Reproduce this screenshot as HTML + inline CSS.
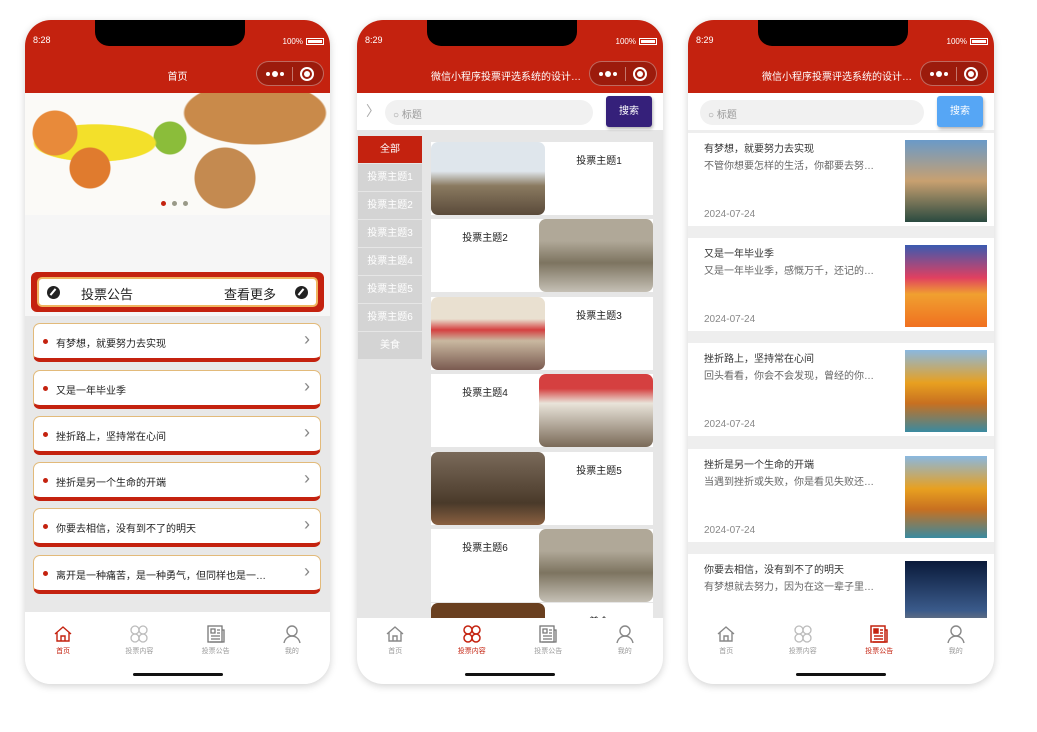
<!DOCTYPE html>
<html><head><meta charset="utf-8"><style>
*{box-sizing:border-box;margin:0;padding:0}
body{width:1037px;height:732px;background:#fff;position:relative;overflow:hidden;font-family:"Liberation Sans","Noto Sans CJK SC",sans-serif;color:#333}
.ph{position:absolute;top:20px;height:664px;border-radius:26px;overflow:hidden;background:#fff;box-shadow:0 2px 8px rgba(0,0,0,.18)}
.hd{position:absolute;left:0;right:0;top:0;height:73px;background:#c4220f;color:#fff}
.notch{position:absolute;top:0;left:70px;width:150px;height:26px;background:#000;border-radius:0 0 14px 14px}
.tm{position:absolute;left:8px;top:15px;font-size:9px}
.bat{position:absolute;right:6px;top:17px;font-size:8px}
.bat i{display:inline-block;width:18px;height:7px;border:1px solid #fff;margin-left:3px;vertical-align:middle;position:relative}
.bat i:after{content:"";position:absolute;inset:1px;background:#fff}
.ttl{position:absolute;top:48px;font-size:10px;width:100%;text-align:center}
.cap{position:absolute;right:6px;top:41px;width:68px;height:25px;border-radius:13px;background:rgba(0,0,0,.2);border:1px solid rgba(255,255,255,.35)}
.cap .d{position:absolute;left:9px;top:10px;width:18px;height:4px;display:flex;gap:2px;align-items:center}
.cap .d b{width:4px;height:4px;background:#fff;border-radius:50%}
.cap .d b:nth-child(2){width:6px;height:6px}
.cap .l{position:absolute;left:35px;top:5px;width:1px;height:14px;background:rgba(255,255,255,.4)}
.cap .o{position:absolute;right:9px;top:5px;width:14px;height:14px;border:2px solid #fff;border-radius:50%}
.cap .o:after{content:"";position:absolute;left:2px;top:2px;width:6px;height:6px;background:#fff;border-radius:50%}
.tab{position:absolute;left:0;right:0;bottom:0;height:66px;background:#fff;display:flex}
.tab div{flex:1;text-align:center;font-size:7px;color:#999;padding-top:6px}
.tab div.a{color:#c4220f}
.tab svg{display:block;margin:0 auto 2px;width:20px;height:20px}
.hb{position:absolute;bottom:8px;left:50%;margin-left:-45px;width:90px;height:3px;background:#111;border-radius:2px}
.sr{position:absolute;top:73px;left:0;right:0;height:37px;background:#fff}
.sin{position:absolute;left:28px;top:7px;width:208px;height:25px;background:#f1f1f1;border-radius:13px;font-size:10px;color:#999;padding:6px 0 0 8px}
.sbtn{position:absolute;right:11px;top:3px;width:46px;height:31px;border-radius:3px;color:#fff;font-size:10px;text-align:center;line-height:31px;box-shadow:1px 2px 3px rgba(0,0,0,.3)}
.li{position:absolute;left:8px;width:288px;height:39px;background:#fff;border:1.5px solid #e2ba7a;border-bottom:4px solid #c4220f;border-radius:7px;font-size:10px;color:#222;padding:11px 0 0 22px}
.li:before{content:"";position:absolute;left:9px;top:15px;width:5px;height:5px;border-radius:50%;background:#c4220f}
.li:after{content:"›";position:absolute;right:10px;top:5px;font-size:18px;color:#888}
.cat{position:absolute;left:1px;width:64px;height:27px;background:#d4d4d4;color:#fff;font-size:10px;text-align:center;line-height:27px}
.cd{position:absolute;left:74px;width:222px;height:73px;background:#fff}
.cd .im{position:absolute;top:0;width:114px;height:73px;border-radius:7px}
.cd .t{position:absolute;top:10px;font-size:10px;color:#222;width:108px;text-align:center}
.nc{position:absolute;left:0;right:0;height:97px;background:#fff;border-bottom:4px solid #eee}
.nc .a{position:absolute;left:16px;top:10px;font-size:10px;color:#333;line-height:14px}
.nc .b{position:absolute;left:16px;top:24px;font-size:10px;color:#666}
.nc .c{position:absolute;left:16px;top:76px;font-size:10px;color:#888}
.nc .im{position:absolute;left:217px;top:7px;width:82px;height:82px}
.ic{position:absolute;top:7px;width:13px;height:13px;border-radius:50%;background:#222}
.ic:after{content:"";position:absolute;left:5px;top:2px;width:2px;height:8px;background:#fff;transform:rotate(40deg)}
</style></head><body>

<!-- Phone 1 -->
<div class="ph" style="left:25px;width:305px">
 <div class="hd"><div class="notch"></div><div class="tm">8:28</div><div class="bat">100%<i></i></div><div class="ttl">首页</div><div class="cap"><div class="d"><b></b><b></b><b></b></div><div class="l"></div><div class="o"></div></div></div>
 <div style="position:absolute;top:73px;left:0;width:305px;height:122px;background:radial-gradient(circle at 30px 40px,#e88a3a 0 22px,transparent 23px),radial-gradient(circle at 65px 75px,#e07b2e 0 20px,transparent 21px),radial-gradient(ellipse at 70px 50px,#f3e02a 0 60px,transparent 62px),radial-gradient(circle at 145px 45px,#8bbd3a 0 16px,transparent 17px),radial-gradient(ellipse at 230px 20px,#c98a4a 0 70px,transparent 72px),radial-gradient(circle at 200px 85px,#c48a50 0 30px,transparent 31px),#fbfaf7"></div>
 <div style="position:absolute;top:181px;left:136px;display:flex;gap:6px"><b style="width:5px;height:5px;border-radius:50%;background:#c4220f"></b><b style="width:5px;height:5px;border-radius:50%;background:#998"></b><b style="width:5px;height:5px;border-radius:50%;background:#998"></b></div>
 <div style="position:absolute;top:195px;left:0;right:0;height:101px;background:#f6f6f6"></div>
 <div style="position:absolute;top:252px;left:6px;width:293px;height:40px;background:#c4220f;border-radius:6px"></div>
 <div style="position:absolute;top:257px;left:12px;width:281px;height:30px;background:#fff;border:2px solid #f0b560;border-radius:5px;font-size:13px;color:#222">
  <span class="ic" style="left:8px"></span>
  <span style="position:absolute;left:42px;top:5px">投票公告</span><span style="position:absolute;left:185px;top:5px">查看更多</span>
  <span class="ic" style="right:8px"></span></div>
 <div style="position:absolute;top:296px;left:0;right:0;height:296px;background:#e8e8e8"></div>
 <div class="li" style="top:303px">有梦想，就要努力去实现</div>
 <div class="li" style="top:350px">又是一年毕业季</div>
 <div class="li" style="top:396px">挫折路上，坚持常在心间</div>
 <div class="li" style="top:442px">挫折是另一个生命的开端</div>
 <div class="li" style="top:488px">你要去相信，没有到不了的明天</div>
 <div class="li" style="top:535px">离开是一种痛苦，是一种勇气，但同样也是一…</div>
 <div class="tab"><div class="a"><svg viewBox="0 0 20 20" fill="none" stroke="#c4220f" stroke-width="1.4"><path d="M2 10L10 3l8 7M4 8v9h12V8M8 17v-5h4v5"/></svg>首页</div><div><svg viewBox="0 0 20 20" fill="none" stroke="#bbb" stroke-width="1.3"><circle cx="6" cy="6" r="4"/><circle cx="14" cy="6" r="4"/><circle cx="6" cy="14" r="4"/><circle cx="14" cy="14" r="4"/></svg>投票内容</div><div><svg viewBox="0 0 20 20" fill="none" stroke="#777" stroke-width="1.3"><rect x="2" y="2" width="14" height="16"/><path d="M16 6h2v12H4M5 5h4v4H5zM11 6h3M11 9h3M5 12h9M5 15h9"/></svg>投票公告</div><div><svg viewBox="0 0 20 20" fill="none" stroke="#888" stroke-width="1.4"><circle cx="10" cy="7" r="5"/><path d="M2 19c1-5 5-7 8-7s7 2 8 7"/></svg>我的</div></div>
 <div class="hb"></div>
</div>

<!-- Phone 2 -->
<div class="ph" style="left:357px;width:306px;background:#e6e6e6">
 <div class="hd"><div class="notch"></div><div class="tm">8:29</div><div class="bat">100%<i></i></div><div class="ttl" style="text-align:left;left:74px;width:auto">微信小程序投票评选系统的设计…</div><div class="cap"><div class="d"><b></b><b></b><b></b></div><div class="l"></div><div class="o"></div></div></div>
 <div class="sr"><span style="position:absolute;left:9px;top:8px;color:#aaa;font-size:14px">〉</span><div class="sin">○ 标题</div><div class="sbtn" style="background:#35207a">搜索</div></div>
 <div class="cat" style="top:116px;background:#c4220f">全部</div>
 <div class="cat" style="top:144px">投票主题1</div><div class="cat" style="top:172px">投票主题2</div><div class="cat" style="top:200px">投票主题3</div><div class="cat" style="top:228px">投票主题4</div><div class="cat" style="top:256px">投票主题5</div><div class="cat" style="top:284px">投票主题6</div><div class="cat" style="top:312px">美食</div>
 <div class="cd" style="top:122px"><div class="im" style="left:0;background:linear-gradient(#dfe6ec 0 40%,#8a7a60 60%,#5a4a3a)"></div><div class="t" style="left:114px">投票主题1</div></div>
 <div class="cd" style="top:199px"><div class="t" style="left:0">投票主题2</div><div class="im" style="left:108px;background:linear-gradient(#b0a898 0 30%,#7d7460 60%,#c5c0b5)"></div></div>
 <div class="cd" style="top:277px"><div class="im" style="left:0;background:linear-gradient(#e9e0d0 0 30%,#d54040 45%,#c9b8a0 60%,#7a5a50)"></div><div class="t" style="left:114px">投票主题3</div></div>
 <div class="cd" style="top:354px"><div class="t" style="left:0">投票主题4</div><div class="im" style="left:108px;background:linear-gradient(#d54040 0 20%,#e9e4da 40%,#7a6a58)"></div></div>
 <div class="cd" style="top:432px"><div class="im" style="left:0;background:linear-gradient(#7a6a5a,#4a3a2a 70%,#8a6040)"></div><div class="t" style="left:114px">投票主题5</div></div>
 <div class="cd" style="top:509px"><div class="t" style="left:0">投票主题6</div><div class="im" style="left:108px;background:linear-gradient(#b0a898 0 30%,#7d7460 60%,#c5c0b5)"></div></div>
 <div class="cd" style="top:583px"><div class="im" style="left:0;background:#6a4020"></div><div class="t" style="left:114px">美食</div></div>
 <div class="tab"><div><svg viewBox="0 0 20 20" fill="none" stroke="#888" stroke-width="1.4"><path d="M2 10L10 3l8 7M4 8v9h12V8M8 17v-5h4v5"/></svg>首页</div><div class="a"><svg viewBox="0 0 20 20" fill="none" stroke="#c4220f" stroke-width="1.5"><circle cx="6" cy="6" r="4"/><circle cx="14" cy="6" r="4"/><circle cx="6" cy="14" r="4"/><circle cx="14" cy="14" r="4"/></svg>投票内容</div><div><svg viewBox="0 0 20 20" fill="none" stroke="#777" stroke-width="1.3"><rect x="2" y="2" width="14" height="16"/><path d="M16 6h2v12H4M5 5h4v4H5zM11 6h3M11 9h3M5 12h9M5 15h9"/></svg>投票公告</div><div><svg viewBox="0 0 20 20" fill="none" stroke="#888" stroke-width="1.4"><circle cx="10" cy="7" r="5"/><path d="M2 19c1-5 5-7 8-7s7 2 8 7"/></svg>我的</div></div>
 <div class="hb"></div>
</div>

<!-- Phone 3 -->
<div class="ph" style="left:688px;width:306px;background:#eee">
 <div class="hd"><div class="notch"></div><div class="tm">8:29</div><div class="bat">100%<i></i></div><div class="ttl" style="text-align:left;left:74px;width:auto">微信小程序投票评选系统的设计…</div><div class="cap"><div class="d"><b></b><b></b><b></b></div><div class="l"></div><div class="o"></div></div></div>
 <div class="sr"><div class="sin" style="left:12px;width:224px">○ 标题</div><div class="sbtn" style="background:#56a6f5">搜索</div></div>
 <div class="nc" style="top:113px"><div class="a">有梦想，就要努力去实现</div><div class="b">不管你想要怎样的生活，你都要去努…</div><div class="c">2024-07-24</div><div class="im" style="background:linear-gradient(#6a9ac8,#c8a070 50%,#2a4a40)"></div></div>
 <div class="nc" style="top:218px"><div class="a">又是一年毕业季</div><div class="b">又是一年毕业季，感慨万千，还记的…</div><div class="c">2024-07-24</div><div class="im" style="background:linear-gradient(#3a5ab0,#e04060 40%,#f0a030 60%,#f07020)"></div></div>
 <div class="nc" style="top:323px"><div class="a">挫折路上，坚持常在心间</div><div class="b">回头看看，你会不会发现，曾经的你…</div><div class="c">2024-07-24</div><div class="im" style="background:linear-gradient(#8ab8e0,#e8a020 40%,#c87020 65%,#3a8aa0)"></div></div>
 <div class="nc" style="top:429px"><div class="a">挫折是另一个生命的开端</div><div class="b">当遇到挫折或失败，你是看见失败还…</div><div class="c">2024-07-24</div><div class="im" style="background:linear-gradient(#8ab8e0,#e8a020 40%,#c87020 65%,#3a8aa0)"></div></div>
 <div class="nc" style="top:534px"><div class="a">你要去相信，没有到不了的明天</div><div class="b">有梦想就去努力，因为在这一辈子里…</div><div class="im" style="background:linear-gradient(#0a1a3a,#3a5a8a 60%,#c0a070)"></div></div>
 <div class="tab"><div><svg viewBox="0 0 20 20" fill="none" stroke="#888" stroke-width="1.4"><path d="M2 10L10 3l8 7M4 8v9h12V8M8 17v-5h4v5"/></svg>首页</div><div><svg viewBox="0 0 20 20" fill="none" stroke="#bbb" stroke-width="1.3"><circle cx="6" cy="6" r="4"/><circle cx="14" cy="6" r="4"/><circle cx="6" cy="14" r="4"/><circle cx="14" cy="14" r="4"/></svg>投票内容</div><div class="a"><svg viewBox="0 0 20 20" fill="none" stroke="#c4220f" stroke-width="1.5"><rect x="2" y="2" width="14" height="16"/><path d="M16 6h2v12H4M11 6h3M11 9h3M5 12h9M5 15h9"/><rect x="5" y="5" width="4" height="4" fill="#c4220f"/></svg>投票公告</div><div><svg viewBox="0 0 20 20" fill="none" stroke="#888" stroke-width="1.4"><circle cx="10" cy="7" r="5"/><path d="M2 19c1-5 5-7 8-7s7 2 8 7"/></svg>我的</div></div>
 <div class="hb"></div>
</div>
</body></html>
